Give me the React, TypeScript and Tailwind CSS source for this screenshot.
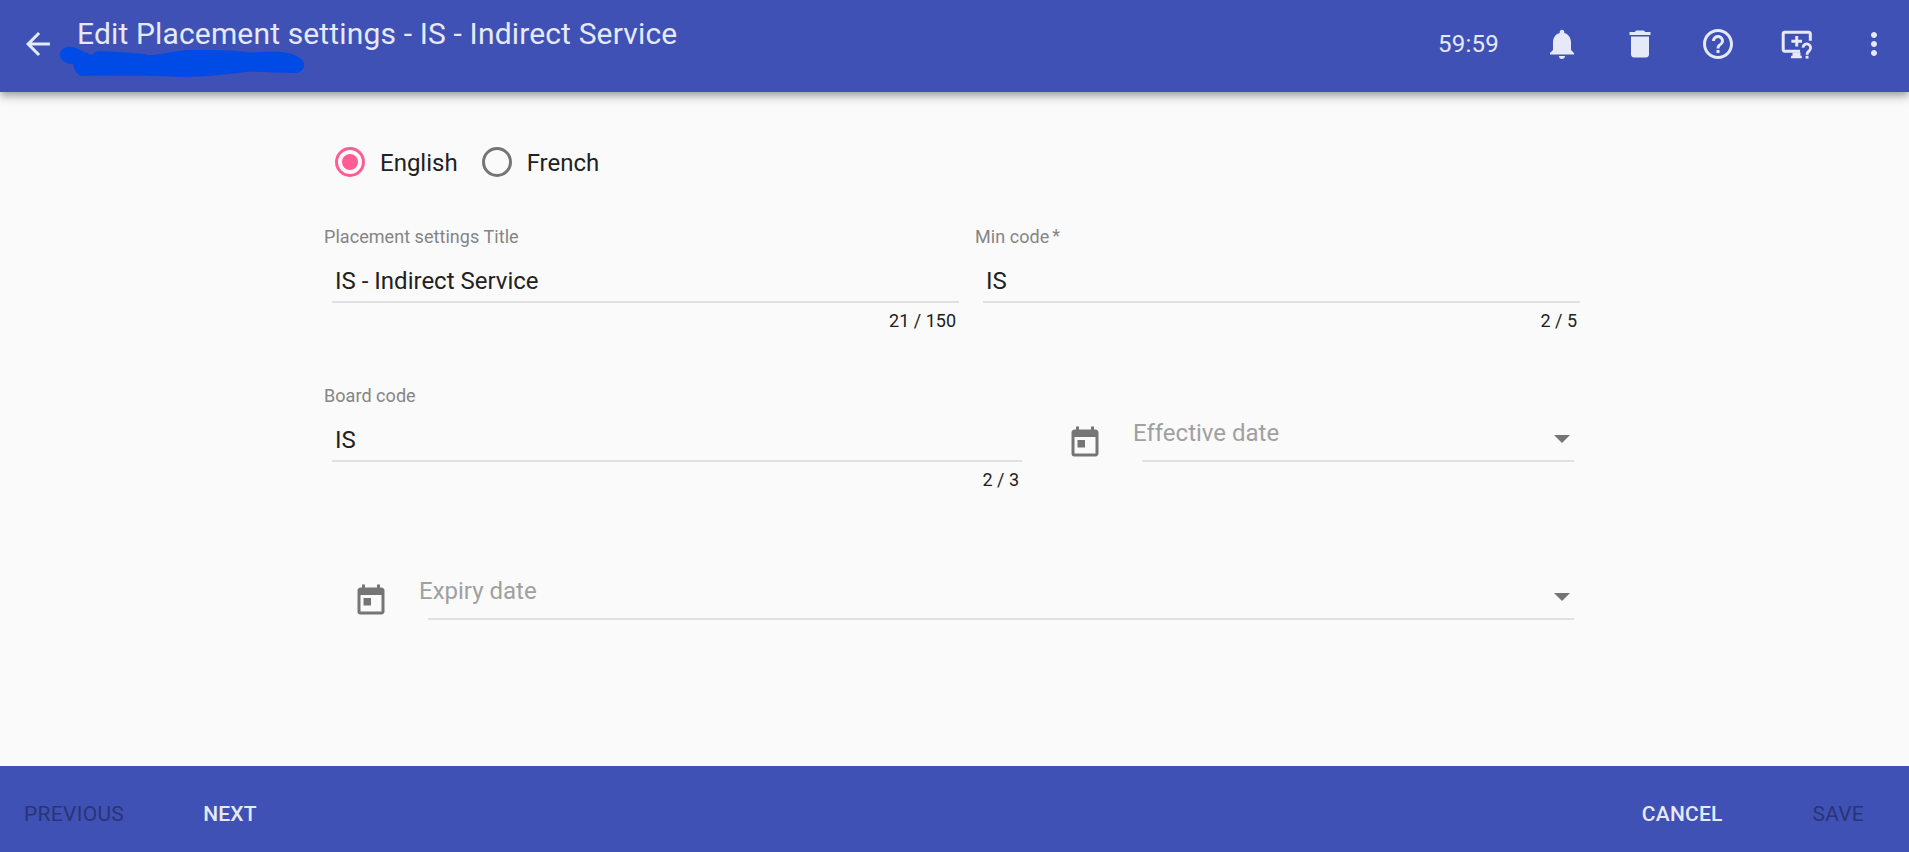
import {
  MdArrowBack,
  MdDelete,
  MdHelpOutline,
  MdMoreVert,
  MdNotifications,
  MdToday,
} from 'react-icons/md';

function TourIcon() {
  return (
    <svg className="ml-px mr-[-1px]" width="36" height="36" viewBox="0 0 36 36" fill="none" stroke="currentColor" strokeWidth="3">
      <path d="M31.3 14.7V7.8a1.6 1.6 0 0 0-1.6-1.6H5.8a1.6 1.6 0 0 0-1.6 1.6v15.8a1.6 1.6 0 0 0 1.6 1.6H21" />
      <path d="M17.7 10v10.6M12.4 15.3H23" />
      <path d="M13.5 26.5h8v3.2h1.3v2.6H12v-2.6h1.5z" fill="currentColor" stroke="none" />
      <path d="M24 21.6a3.8 3.8 0 1 1 6.5 2.8c-1.5 1.4-2.5 2-2.5 4.3" strokeWidth="2.8" />
      <path d="M26.6 29.8h2.9v2.8h-2.9z" fill="currentColor" stroke="none" />
    </svg>
  );
}

function Radio({ label, checked = false }: { label: string; checked?: boolean }) {
  return (
    <label className="flex h-[30px] items-center">
      <span
        className={
          checked
            ? 'flex size-[30px] items-center justify-center rounded-full border-[3px] border-[#ff5c93]'
            : 'flex size-[30px] items-center justify-center rounded-full border-[3px] border-[#757575]'
        }
      >
        {checked && <span className="size-4 rounded-full bg-[#ff5c93]" />}
      </span>
      <span className="ml-[15px] pt-0.5 text-2xl leading-8">{label}</span>
    </label>
  );
}

interface FieldProps {
  label: string;
  value: string;
  count: string;
  required?: boolean;
  className: string;
}

function Field({ label, value, count, required, className }: FieldProps) {
  return (
    <div className={className}>
      <div className="flex h-6 pl-px text-lg leading-6 tracking-[0.05px] text-[#858585]">
        {label}
        {required && <span className="ml-[3px] leading-[22px]">*</span>}
      </div>
      <div className="ml-[9px] mt-4 border-b-2 border-[#e0e0e0] pb-1 pl-[3px] text-2xl leading-8">
        {value}
      </div>
      <div className="mt-1.5 pr-[3px] text-right text-lg leading-6">{count}</div>
    </div>
  );
}

function DateField({ label, className }: { label: string; className: string }) {
  return (
    <div className={className}>
      <MdToday className="mt-[41px] size-9 shrink-0 text-[#757575]" />
      <div className="ml-[30px] mt-[33px] flex-1">
        <div className="flex h-[43px] justify-between">
          <span className="text-2xl leading-8 text-[#a0a0a0]">{label}</span>
          <svg className="mr-1 mt-[18px]" width="16" height="8" viewBox="0 0 16 8">
            <path d="M0 0h16L8 8z" fill="#757575" />
          </svg>
        </div>
        <div className="ml-[9px] h-0.5 bg-[#e0e0e0]" />
      </div>
    </div>
  );
}

export default function App() {
  return (
    <div className="flex h-[852px] flex-col bg-[#fafafa] font-[Roboto,sans-serif] text-[#212121]">
      <header className="relative flex h-[92px] shrink-0 bg-[#3f51b5] text-[#e6e9f8] shadow-[0_3px_6px_-1.5px_rgba(0,0,0,0.2),0_6px_7.5px_0_rgba(0,0,0,0.14),0_1.5px_15px_0_rgba(0,0,0,0.12)]">
        <MdArrowBack className="ml-5 mt-[26px] size-9" />
        <h1 className="ml-[21px] mt-3.5 text-[30px] leading-10 tracking-[0.15px]">
          Edit Placement settings - IS - Indirect Service
        </h1>
        <svg className="absolute left-[60px] top-[45px]" width="246" height="34" viewBox="0 0 246 34">
          <path
            d="M8 2c7-1 12 4 24 8 3-4 6-4 11-4 16 1 29 2 42 3 4 2 7 1 15 0 13-2 20-4 35-4 16 0 35 0 50 2 12 1 22-1 36 0 11 1 21 5 23 11 1 6-3 10-9 10-18 0-35-2-49-1-18 2-40 5-64 5-20-1-45-2-100-1-5-1-8-6-9-12-6 0-13-3-13-9 0-4 3-8 8-8z"
            fill="#004be5"
          />
        </svg>
        <div className="ml-auto mr-[17px] flex h-[88px] items-center">
          <span className="mr-[45px] text-2xl leading-8 tracking-[0.24px]">59:59</span>
          <div className="flex items-center gap-[42px]">
            <MdNotifications className="size-9" />
            <MdDelete className="size-9" />
            <MdHelpOutline className="size-9" />
            <TourIcon />
            <MdMoreVert className="size-9" />
          </div>
        </div>
      </header>

      <main className="flex flex-1 flex-col pl-[323px] pt-[55px]">
        <div className="flex gap-6 pl-3">
          <Radio label="English" checked />
          <Radio label="French" />
        </div>
        <div className="mt-12 flex">
          <Field label="Placement settings Title" value="IS - Indirect Service" count="21 / 150" className="w-[636px]" />
          <Field label="Min code" value="IS" count="2 / 5" required className="ml-[15px] w-[606px]" />
        </div>
        <div className="mt-[51px] flex">
          <Field label="Board code" value="IS" count="2 / 3" className="w-[699px]" />
          <DateField label="Effective date" className="ml-[45px] flex w-[507px] items-start" />
        </div>
        <DateField label="Expiry date" className="ml-[30px] mt-[50px] flex w-[1221px] items-start" />
      </main>

      <footer className="flex h-[86px] shrink-0 justify-between bg-[#3f51b5] pl-6 pr-[45px] pt-9 text-[21px] font-medium leading-6 tracking-[0.01em] text-[#e6e9f8]">
        <div className="flex gap-[79px]">
          <button disabled className="h-6 font-normal tracking-[0.3px] text-[#293576]">PREVIOUS</button>
          <button className="h-6">NEXT</button>
        </div>
        <div className="flex gap-[90px]">
          <button className="h-6">CANCEL</button>
          <button disabled className="h-6 font-normal text-[#293576]">SAVE</button>
        </div>
      </footer>
    </div>
  );
}
